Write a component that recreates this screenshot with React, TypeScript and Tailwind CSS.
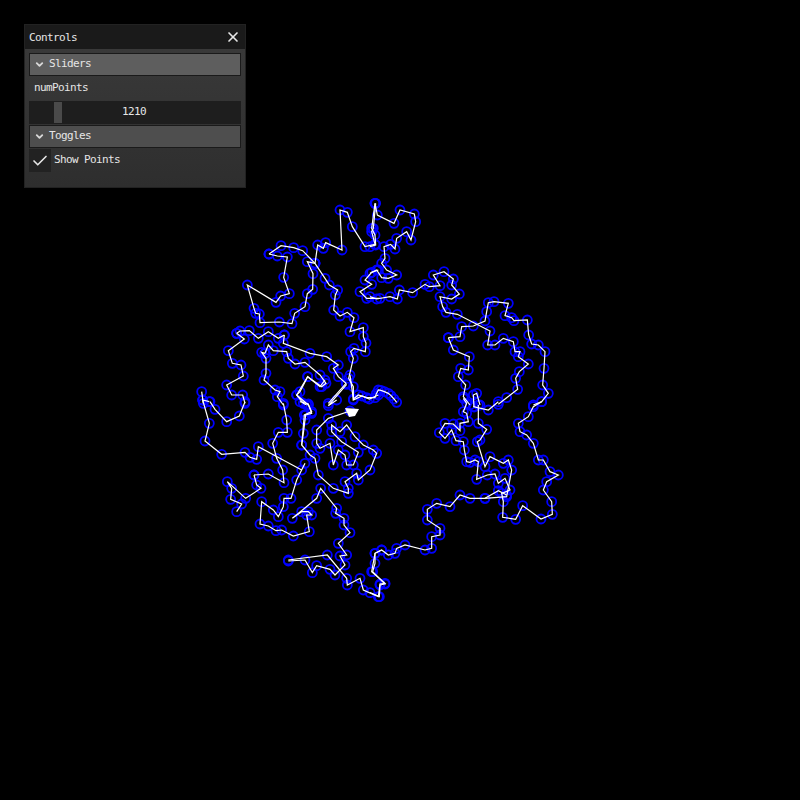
import React from "react";
import { X, ChevronDown, Check } from "lucide-react";

// walk traced from 3x crops: [originX, originY, "x,y x,y ..."]
const TRACES: [number, number, string][] = [
  [190, 195, "237,177 262,183 292,186 281,247 298,296 272,303 258,322 172,270 192,340 197,355 208,357 210,383 268,381 306,386 314,355 345,335 352,296 368,283 369,236 352,200 375,205"],
  [190, 195, "237,177 273,152 311,158 338,167 375,205 405,250 418,270 443,285 436,300 431,345 450,363 472,352 492,368 480,410 520,398 520,425 528,444 526,470 492,460 482,470 490,490 476,550 490,575 490,615 516,603 538,612 565,600"],
  [190, 195, "375,205 383,150 400,160 407,143 456,165 450,45 472,52 487,95 525,155 555,148 545,110 550,100 557,25"],
  [370, 195, "15,25 22,60 72,85 90,45 133,57 137,80 123,135 110,110 80,130 75,162 62,148 42,155 45,190 35,205 50,225 80,240 55,250 35,248 20,225 0,235"],
  [370, 195, "15,25 5,100 15,120 17,150 0,155"],
  [190, 195, "565,225 545,232 525,255 545,268 510,290 530,310 570,310"],
  [370, 195, "0,305 20,312 60,305 82,312 88,285 128,293 165,268 178,275 210,272 190,240 222,230 250,252 245,270 268,297 245,312 210,305 218,335 228,352 262,358 360,408 353,450 375,450 400,430 430,440 435,470 450,470 445,485 475,507 448,530 437,550 443,583 410,608 385,628"],
  [370, 195, "235,428 270,425 275,395 310,393 345,378 350,350 355,323 372,320 415,325 405,362 425,368 432,377 472,375 476,420 485,447 505,450 525,470 522,520 518,570 535,595 515,620 490,630"],
  [370, 195, "235,428 250,465 298,485 295,525 272,520 265,545 287,570 280,605 300,630"],
  [370, 195, "312,636 310,600 320,595 330,630"],
  [370, 400, "515,5 490,20 475,50 445,70 450,95 470,105 490,130 505,180 520,180 540,215 565,225 530,245 520,270 545,305 547,343 513,357 458,317 437,358 398,352 400,305 395,280 420,270 405,235 385,250 375,222 352,225 320,238 325,185 315,180 300,187 290,185 283,150 280,125 258,122 245,90 225,115 208,98 225,70 250,72 270,92 270,70 295,65 290,40 280,35 290,10 280,-5"],
  [370, 400, "310,20 355,30 385,5"],
  [370, 400, "325,15 325,70 350,88 330,120 322,125 345,200 360,170 400,190 415,180 425,210 410,290 345,295 300,295 270,285 240,320 200,310 172,328 172,360 210,385 210,405 185,410 185,445 165,450 105,435 80,445 75,460 55,465 35,450 15,460 15,490 8,515 45,552 30,555 28,590 0,578"],
  [370, 400, "345,295 385,272 410,285"],
  [190, 400, "295,480 412,465 470,535 472,555 510,535 520,570 565,590 570,552 585,550 545,515 555,460 575,450"],
  [190, 400, "295,483 345,480 367,518 380,497 420,508 435,525 465,495 450,468 470,465 445,430 480,398 462,375 462,355 437,340 440,325 392,265 380,295 307,355 335,335 355,335 365,345 350,345 358,395 310,408 275,390 258,392 235,378 210,372 215,305 250,330 265,350 280,320 282,295 303,295 320,240 345,190 335,210 205,140 200,178 180,172 165,157 95,163 45,123 58,70 38,0"],
  [190, 400, "60,5 75,28 110,65 148,48 165,5"],
  [190, 400, "192,225 235,222 282,248 278,210 260,175 248,130 265,97 292,97 290,60 280,10"],
  [190, 400, "192,225 200,255 213,265 167,295 112,245 125,265 122,298 155,312 140,335"],
  [190, 195, "283,420 280,445 360,475 410,485 445,510 430,520 445,545 468,565 415,625"],
  [190, 195, "140,415 163,432 115,467 127,505 153,510 160,543 110,570 125,600 158,600 165,625"],
  [190, 195, "140,415 150,408 178,407 205,430 235,410 265,430 283,420"],
  [190, 195, "225,475 235,450 250,467 290,470 295,490 315,507 345,502 390,540 408,565 395,575 353,545 330,590 320,600 340,625 350,630"],
  [190, 195, "225,475 215,472 228,490 228,535 222,555 255,585 270,590 262,605 280,630"],
  [190, 195, "35,590 40,625 38,615 58,620"],
  [295, 375, "305,82 297,72 288,62 280,55 268,50 258,46 250,45 244,56 240,68 215,68 190,60 175,72 165,0"],
  [295, 375, "155,28 100,92 125,75"],
  [295, 375, "165,108 100,130 65,165 65,205 75,220 105,205 115,270 130,225 150,240 155,270 175,270 190,232 140,200 110,170 110,150 135,170 155,150 180,185 205,210 235,225 245,235 225,285 190,315 185,295 150,320 160,340 160,355 115,340 70,300 60,250 45,240 20,210 28,120 50,110 40,90 5,60 38,5 75,35 90,15"],
  [190, 400, "335,135 340,100 345,60 347,45 365,40 355,12 330,5"],
];

const WALKS = TRACES.map(([ox, oy, raw]) =>
  raw.split(" ").map((p) => {
    const [x, y] = p.split(",").map(Number);
    return [ox + x / 3, oy + y / 3];
  })
);

const Walk = () => (
  <svg className="absolute inset-0" width="800" height="800" viewBox="0 0 800 800">
    {WALKS.flat().map(([x, y], i) => (
      <circle key={i} cx={x} cy={y} r="4.5" fill="none" stroke="#0000ff" strokeWidth="1.8" />
    ))}
    {WALKS.map((pts, i) => (
      <polyline
        key={i}
        points={pts.map((p) => p.join(",")).join(" ")}
        fill="none"
        stroke="#ffffff"
        strokeWidth="1.2"
      />
    ))}
    <polygon points="345,408 359,409 355,416 349,417" fill="#ffffff" />
  </svg>
);

const SectionHeader = ({ label, color }: { label: string; color: string }) => (
  <div className={`flex h-[23px] items-center border border-[#1a1a1a] pl-[4px] ${color}`}>
    <ChevronDown size={11} strokeWidth={4} className="text-[#d8d8d8]" />
    <span className="ml-[4px]">{label}</span>
  </div>
);

export default function App() {
  return (
    <div className="relative h-[800px] w-[800px] overflow-hidden bg-black">
      <Walk />
      <div className="absolute left-[24px] top-[24px] flex h-[164px] w-[222px] flex-col border border-[#222222] bg-linear-to-b from-[#3b3b3b] to-[#2e2e2e] font-['DejaVu_Sans_Mono',monospace] text-[11px] tracking-[-0.62px] text-[#e6e6e6]">
        <div className="flex h-[24px] items-center justify-between bg-[#1a1a1a] pl-[4px] pr-[4px]">
          <span className="pt-[2px]">Controls</span>
          <X size={16} strokeWidth={2.5} className="text-[#e6e6e6]" />
        </div>
        <div className="flex flex-col px-[4px] pt-[4px]">
          <SectionHeader label="Sliders" color="bg-[#5e5e5e]" />
          <div className="flex h-[25px] items-center pl-[5px]">numPoints</div>
          <div className="relative flex h-[23px] items-center justify-center bg-[#1e1e1e] pr-[2px]">
            <div className="absolute bottom-[1px] left-[25px] top-[1px] w-[8px] bg-[#4a4a4a]" />
            <span>1210</span>
          </div>
          <div className="mt-[1px]">
            <SectionHeader label="Toggles" color="bg-[#4e4e4e]" />
          </div>
          <div className="mt-[1px] flex h-[23px] items-center">
            <div className="flex h-[23px] w-[22px] items-center justify-center bg-[#222222]">
              <Check size={18} strokeWidth={2.2} className="text-[#e6e6e6]" />
            </div>
            <span className="ml-[3px]">Show Points</span>
          </div>
        </div>
      </div>
    </div>
  );
}
